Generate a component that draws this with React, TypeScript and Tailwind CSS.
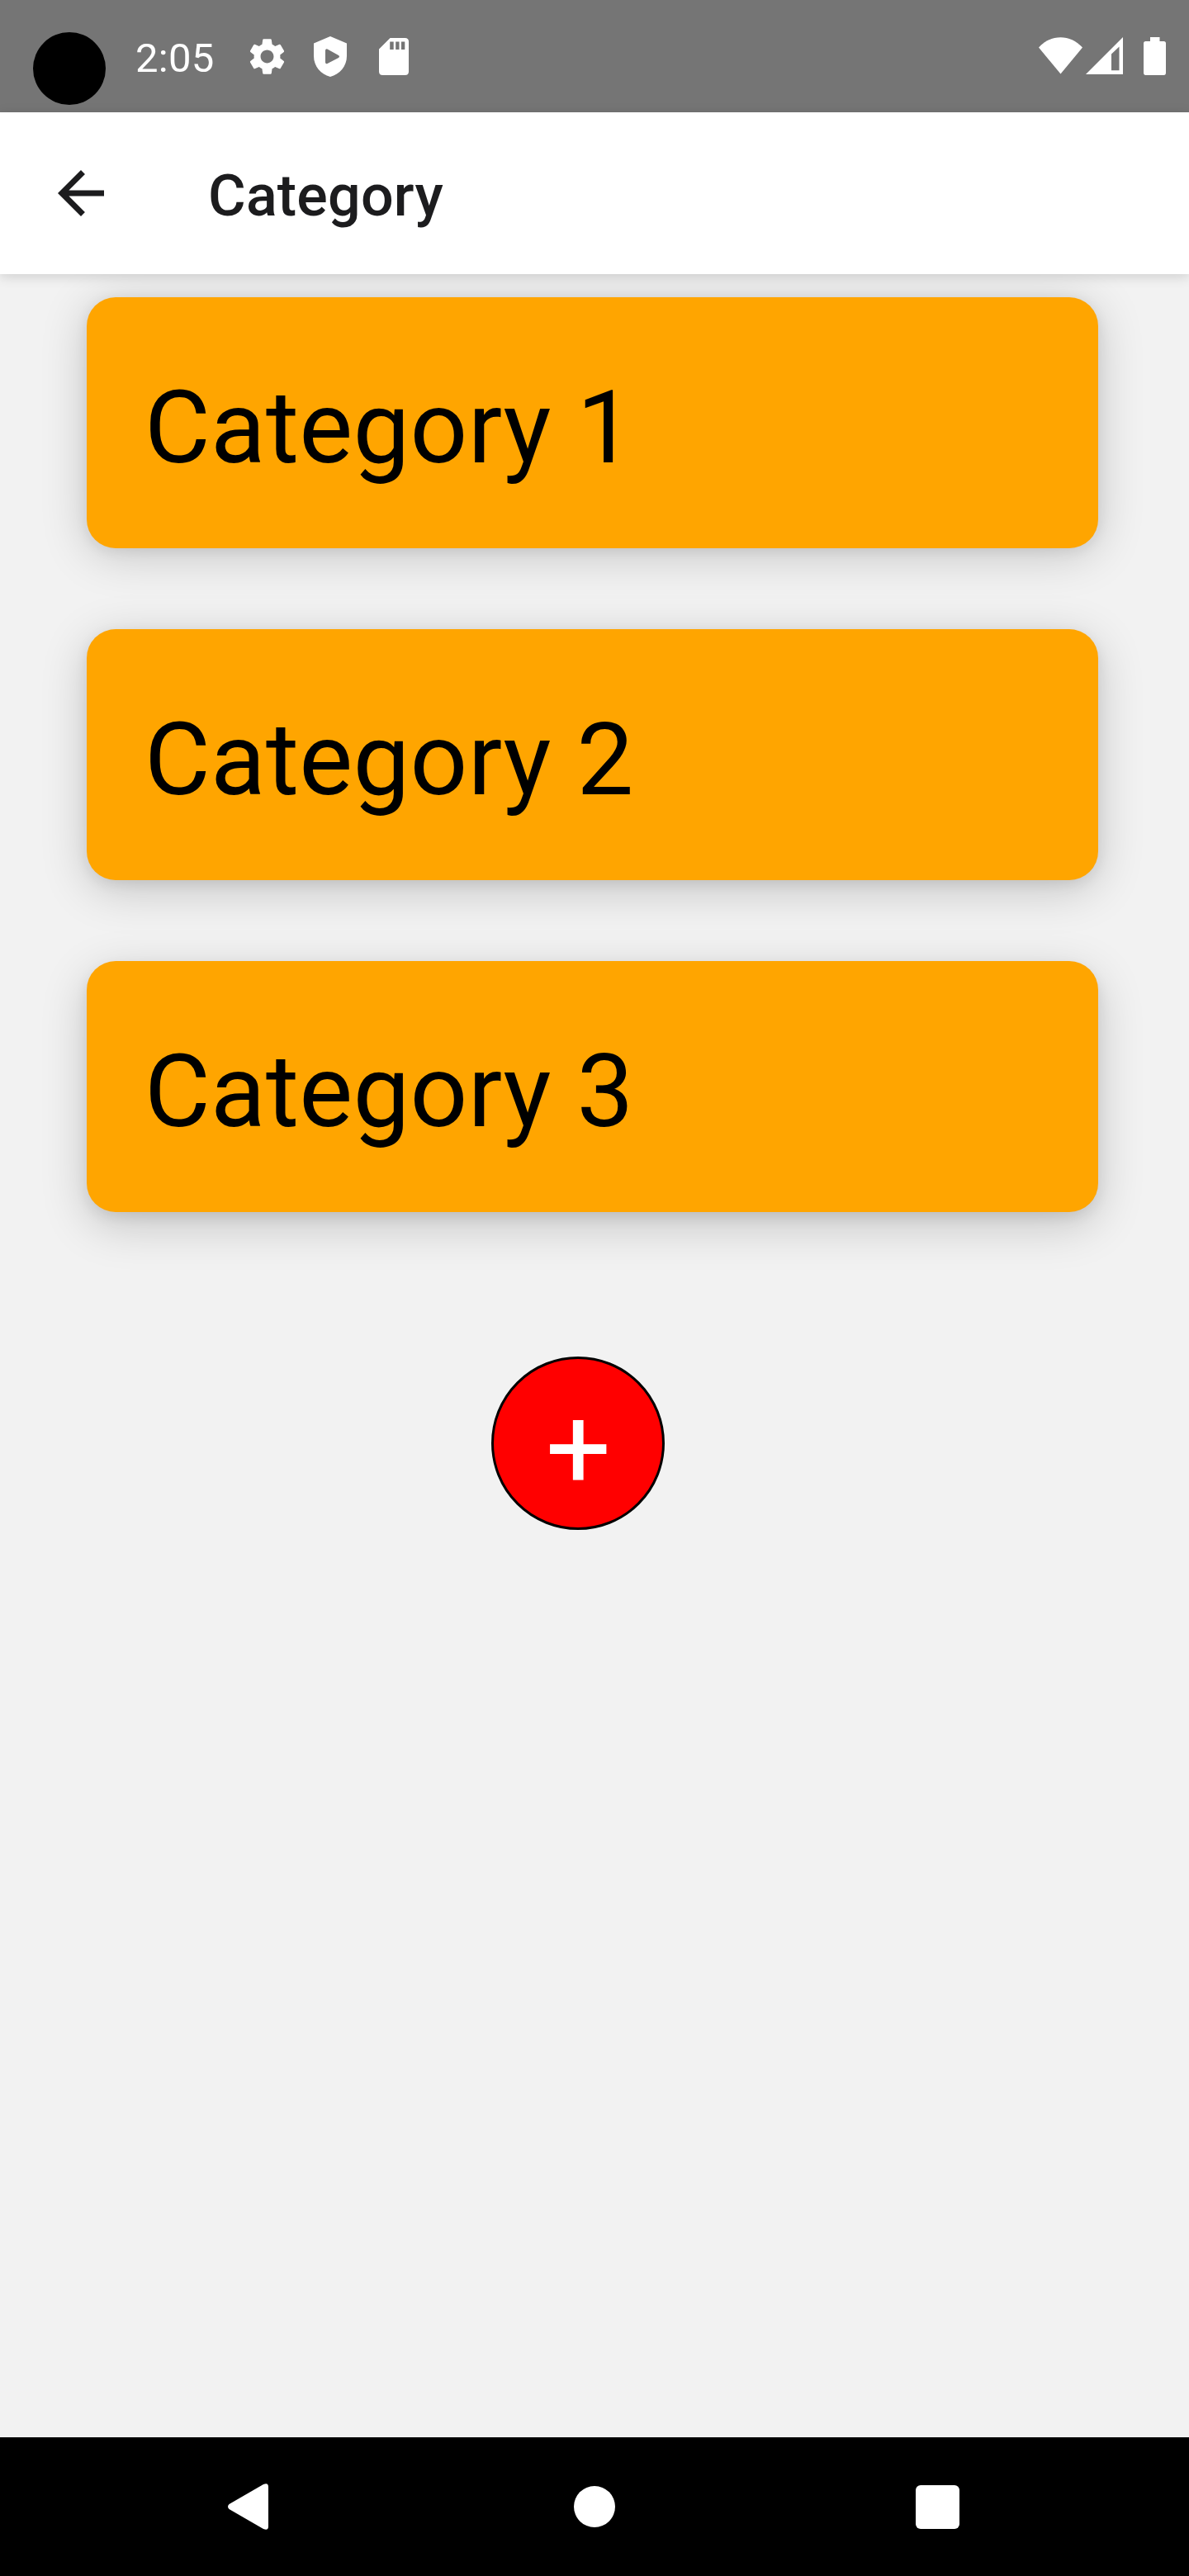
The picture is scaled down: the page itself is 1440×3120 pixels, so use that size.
import React from "react";

const cards = [
  {
    label: "Category 1",
    shadow: "shadow-[0_3px_16px_rgba(0,0,0,0.08),0_8px_56px_rgba(0,0,0,0.19)]",
  },
  {
    label: "Category 2",
    shadow: "shadow-[0_5px_16px_rgba(0,0,0,0.08),0_12px_56px_rgba(0,0,0,0.19)]",
  },
  {
    label: "Category 3",
    shadow: "shadow-[0_7px_16px_rgba(0,0,0,0.08),0_16px_56px_rgba(0,0,0,0.19)]",
  },
];

function StatusBar() {
  return (
    <div className="flex h-[136px] shrink-0 items-start bg-[#757575] text-white">
      <div className="mt-[39px] ml-10 size-[88px] rounded-full bg-black" />
      <span className="mt-[42px] ml-9 w-[97px] text-[49px] leading-[58px] tracking-[0.3px] whitespace-nowrap">2:05</span>
      <svg className="mt-[42px] ml-9 size-[53px]" viewBox="0 0 24 24" fill="currentColor">
        <path d="M19.14 12.94c.04-.3.06-.61.06-.94 0-.32-.02-.64-.07-.94l2.03-1.58c.18-.14.23-.41.12-.61l-1.92-3.32c-.12-.22-.37-.29-.59-.22l-2.39.96c-.5-.38-1.03-.7-1.62-.94l-.36-2.54c-.04-.24-.24-.41-.48-.41h-3.84c-.24 0-.43.17-.47.41l-.36 2.54c-.59.24-1.13.57-1.62.94l-2.39-.96c-.22-.08-.47 0-.59.22L2.74 8.87c-.12.21-.08.47.12.61l2.03 1.58c-.05.3-.09.63-.09.94s.02.64.07.94l-2.03 1.58c-.18.14-.23.41-.12.61l1.92 3.32c.12.22.37.29.59.22l2.39-.96c.5.38 1.03.7 1.62.94l.36 2.54c.05.24.24.41.48.41h3.84c.24 0 .44-.17.47-.41l.36-2.54c.59-.24 1.13-.56 1.62-.94l2.39.96c.22.08.47 0 .59-.22l1.92-3.32c.12-.22.07-.47-.12-.61l-2.01-1.58zM12 15.6c-1.98 0-3.6-1.62-3.6-3.6s1.62-3.6 3.6-3.6 3.6 1.62 3.6 3.6-1.62 3.6-3.6 3.6z" />
      </svg>
      <svg className="mt-11 ml-[30px] h-[49px] w-10" viewBox="0 0 40 49">
        <path fill="currentColor" fillRule="evenodd" d="M20 0 40 8.5V24C40 36 31.5 46 20 49 8.5 46 0 36 0 24V8.5ZM14 17V31.5Q14.3 34 16.5 33L30 26Q32 24.5 30 23L16.5 15.5Q14.3 14.8 14 17Z" />
      </svg>
      <svg className="mt-[46px] ml-[39px] h-[45px] w-9" viewBox="0 0 36 45">
        <path fill="currentColor" fillRule="evenodd" d="M13.5 0H31.5Q36 0 36 4.5V40.5Q36 45 31.5 45H4.5Q0 45 0 40.5V13.5ZM13.2 4.5V14H17.7V4.5ZM20.2 4.5V14H24.5V4.5ZM27 4.5V14H31.3V4.5Z" />
      </svg>
      <svg className="mt-[45px] ml-auto h-[45px] w-[53px]" viewBox="0 0 53 45">
        <path fill="currentColor" d="M0 12.5C15 -4 38 -4 53 12.5L26.5 44.5Z" />
      </svg>
      <svg className="mt-[45px] ml-1 h-[45px] w-[45px]" viewBox="0 0 45 45">
        <path fill="currentColor" fillRule="evenodd" d="M0 45 45 0V45ZM31 20.5V40.2H40.5V11.5Z" />
      </svg>
      <svg className="mt-[45px] mr-7 ml-[25px] h-[46px] w-[27px]" viewBox="0 0 27 46">
        <path fill="currentColor" d="M8 0H19.5V5H24.5Q27 5 27 7.5V43Q27 46 24.5 46H2.5Q0 46 0 43V7.5Q0 5 2.5 5H8Z" />
      </svg>
    </div>
  );
}

function AppBar() {
  return (
    <header className="relative z-10 flex h-[196px] shrink-0 items-center bg-white pl-14 text-[#1c1c1e] shadow-[0_3px_14px_rgba(0,0,0,0.15)]">
      <svg className="size-[84px]" viewBox="0 0 24 24" fill="currentColor">
        <path d="M20 11H7.83l5.59-5.59L12 4l-8 8 8 8 1.41-1.41L7.83 13H20z" />
      </svg>
      <h1 className="mt-1.5 ml-28 text-[70px] leading-[82px] font-medium tracking-[0.2px]">Category</h1>
    </header>
  );
}

function NavBar() {
  return (
    <nav className="flex h-[168px] shrink-0 items-center bg-black text-white">
      <svg className="ml-[276px] h-14 w-[49px]" viewBox="0 0 49 56">
        <path fill="currentColor" d="M1.5 25 43 1Q49 -1.5 49 4V52Q49 57.5 43 55L1.5 31Q-1.5 28 1.5 25Z" />
      </svg>
      <div className="ml-[370px] size-[50px] rounded-full bg-white" />
      <div className="ml-[363.5px] size-[53px] rounded-md bg-white" />
    </nav>
  );
}

export default function App() {
  return (
    <div className="flex h-[3120px] w-[1440px] flex-col overflow-hidden bg-[#f2f2f2] font-[Roboto,sans-serif]">
      <StatusBar />
      <AppBar />
      <main className="flex flex-1 flex-col pt-7 pl-[105px]">
        <div className="flex w-[1225px] flex-col gap-[98px]">
          {cards.map((c) => (
            <div key={c.label} className={"flex h-[304px] items-center rounded-[35px] bg-[#ffa500] pl-[70px] " + c.shadow}>
              <span className="mt-3 text-[122.5px] leading-[144px] tracking-[0.27px] text-black">{c.label}</span>
            </div>
          ))}
        </div>
        <button className="mt-[175px] ml-[490px] flex size-[210px] items-center justify-center rounded-full border-[3.5px] border-black bg-[#ff0000] pt-3 pl-px text-[140px] leading-[164px] text-white">
          +
        </button>
      </main>
      <NavBar />
    </div>
  );
}
